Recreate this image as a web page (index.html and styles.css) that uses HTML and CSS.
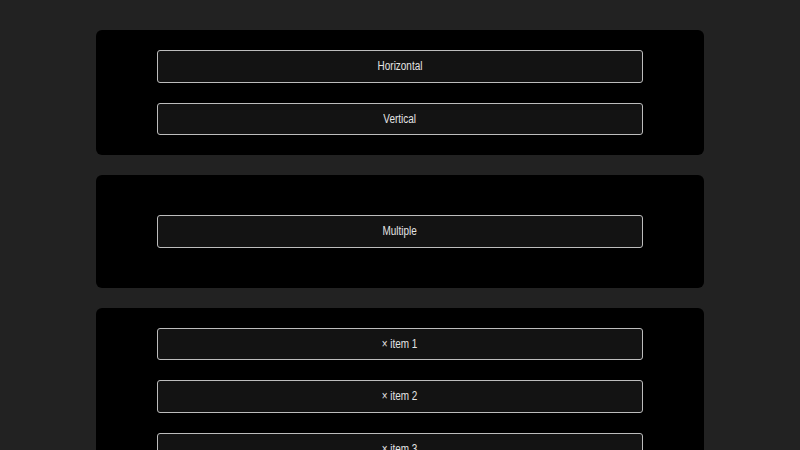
FILE: index.html
```html
<!DOCTYPE html>
<html>
<head>
<meta charset="utf-8">
<link rel="stylesheet" href="styles.css">
</head>
<body>
<div class="page">
  <section class="card">
    <button class="btn"><span class="label">Horizontal</span></button>
    <button class="btn"><span class="label">Vertical</span></button>
  </section>
  <section class="card card-single">
    <button class="btn"><span class="label">Multiple</span></button>
  </section>
  <section class="card">
    <button class="btn"><span class="label">× item 1</span></button>
    <button class="btn"><span class="label">× item 2</span></button>
    <button class="btn"><span class="label">× item 3</span></button>
  </section>
</div>
</body>
</html>
```
FILE: styles.css
```css
html, body {
  margin: 0;
  padding: 0;
  background: #222222;
  font-family: "Liberation Sans", Arial, sans-serif;
}
.page {
  width: 608px;
  margin: 0 auto;
  padding-top: 30px;
  display: flex;
  flex-direction: column;
  gap: 20px;
}
.card {
  background: #000000;
  border-radius: 6px;
  padding: 20px 0;
  display: flex;
  flex-direction: column;
  align-items: center;
  gap: 20px;
}
.card-single {
  padding: 40px 0;
}
.btn {
  width: 486px;
  height: 32.5px;
  box-sizing: border-box;
  background: #131313;
  border: 1px solid #bdbdbd;
  border-radius: 3px;
  color: #e4e4e4;
  font-family: "Liberation Sans", Arial, sans-serif;
  font-size: 12px;
  padding: 0;
  display: flex;
  align-items: center;
  justify-content: center;
}
.label {
  display: inline-block;
  transform: scaleX(0.83);
  white-space: nowrap;
}
```
